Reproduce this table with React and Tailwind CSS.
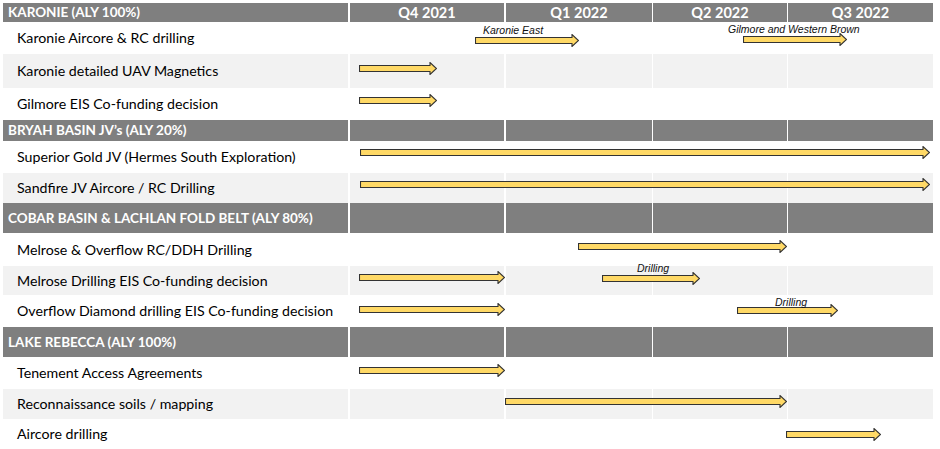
import React from "react";

const COLS = [
  { w: "w-[154px]", ml: "ml-[2px]", label: "Q4 2021" },
  { w: "w-[146px]", ml: "ml-[2px]", label: "Q1 2022" },
  { w: "w-[134px]", ml: "ml-px", label: "Q2 2022" },
  { w: "w-[145px]", ml: "ml-px", label: "Q3 2022" },
];

const SECTIONS = [
  {
    title: "KARONIE (ALY 100%)",
    h: "h-[19px]",
    quarters: true,
    rows: [
      {
        label: "Karonie Aircore & RC drilling",
        h: "h-[32px]",
        arrows: [
          { x1: 475, x2: 579, cy: 18, text: "Karonie East", lx: 483, ly: 8 },
          { x1: 743, x2: 847, cy: 17, text: "Gilmore and Western Brown", lx: 728, ly: 7 },
        ],
      },
      { label: "Karonie detailed UAV Magnetics", h: "h-[34px]", grey: true, arrows: [{ x1: 359, x2: 437, cy: 14 }] },
      { label: "Gilmore EIS Co-funding decision", h: "h-[32px]", arrows: [{ x1: 359, x2: 437, cy: 12 }] },
    ],
  },
  {
    title: "BRYAH BASIN JV\u2019s (ALY 20%)",
    h: "h-[21px]",
    rows: [
      { label: "Superior Gold JV (Hermes South Exploration)", h: "h-[32px]", arrows: [{ x1: 360, x2: 930, cy: 11 }] },
      { label: "Sandfire JV Aircore / RC Drilling", h: "h-[30px]", grey: true, arrows: [{ x1: 360, x2: 930, cy: 11 }] },
    ],
  },
  {
    title: "COBAR BASIN & LACHLAN FOLD BELT (ALY 80%)",
    h: "h-[30px]",
    rows: [
      { label: "Melrose & Overflow RC/DDH Drilling", h: "h-[33px]", arrows: [{ x1: 578, x2: 787, cy: 13 }] },
      {
        label: "Melrose Drilling EIS Co-funding decision",
        h: "h-[29px]",
        grey: true,
        arrows: [
          { x1: 359, x2: 505, cy: 11 },
          { x1: 602, x2: 700, cy: 12, text: "Drilling", lx: 637, ly: 2 },
        ],
      },
      {
        label: "Overflow Diamond drilling EIS Co-funding decision",
        h: "h-[32px]",
        arrows: [
          { x1: 359, x2: 505, cy: 14 },
          { x1: 737, x2: 838, cy: 15, text: "Drilling", lx: 775, ly: 7 },
        ],
      },
    ],
  },
  {
    title: "LAKE REBECCA (ALY 100%)",
    h: "h-[30px]",
    rows: [
      { label: "Tenement Access Agreements", h: "h-[32px]", arrows: [{ x1: 359, x2: 505, cy: 13 }] },
      { label: "Reconnaissance soils / mapping", h: "h-[30px]", grey: true, arrows: [{ x1: 505, x2: 787, cy: 12 }] },
      { label: "Aircore drilling", h: "h-[30px]", arrows: [{ x1: 786, x2: 881, cy: 15 }] },
    ],
  },
];

function Arrow({ x1, x2, cy }) {
  const w = x2 - x1;
  const H = 13;
  const m = H / 2;
  const head = 7;
  const pts = [
    [0.5, m - 3],
    [w - head, m - 3],
    [w - head, 0.5],
    [w - 0.5, m],
    [w - head, H - 0.5],
    [w - head, m + 3],
    [0.5, m + 3],
  ]
    .map((p) => p.join(","))
    .join(" ");
  return (
    <svg
      className="absolute"
      style={{ left: x1 - 3, top: cy - m, width: w, height: H }}
      width={w}
      height={H}
      viewBox={`0 0 ${w} ${H}`}
    >
      <polygon points={pts} fill="#ffd966" stroke="#333333" strokeWidth="1.1" strokeLinejoin="miter" />
    </svg>
  );
}

function Row({ row }) {
  const bg = row.grey ? "bg-[#f2f2f2]" : "bg-white";
  return (
    <div className={`relative flex ${row.h}`}>
      <div className={`w-[345px] ${bg} flex items-center pl-[14px] text-[14.2px] text-black`}>{row.label}</div>
      {COLS.map((c) => (
        <div key={c.label} className={`${c.w} ${c.ml} ${bg}`} />
      ))}
      {row.arrows.map((a, i) => (
        <React.Fragment key={i}>
          <Arrow {...a} />
          {a.text && (
            <div
              className="absolute whitespace-nowrap text-[10.5px] leading-[12px] italic text-[#111] font-['Liberation_Sans',Arial,sans-serif]"
              style={{ left: a.lx - 3, top: a.ly - 6 }}
            >
              {a.text}
            </div>
          )}
        </React.Fragment>
      ))}
    </div>
  );
}

function Header({ section }) {
  return (
    <div className={`flex ${section.h} text-white font-bold`}>
      <div className="w-[345px] bg-[#7f7f7f] flex items-center pl-[5px] text-[13.5px]">{section.title}</div>
      {COLS.map((c) => (
        <div key={c.label} className={`${c.w} ${c.ml} bg-[#7f7f7f] flex items-center justify-center text-[14.5px]`}>
          {section.quarters ? c.label : ""}
        </div>
      ))}
    </div>
  );
}

export default function App() {
  return (
    <div className="w-[940px] h-[449px] overflow-hidden bg-white pt-[3px] pl-[3px] font-['Lato','Noto_Sans',sans-serif]">
      <div className="flex flex-col w-[930px]">
        {SECTIONS.map((s) => (
          <React.Fragment key={s.title}>
            <Header section={s} />
            {s.rows.map((r) => (
              <Row key={r.label} row={r} />
            ))}
          </React.Fragment>
        ))}
      </div>
    </div>
  );
}
